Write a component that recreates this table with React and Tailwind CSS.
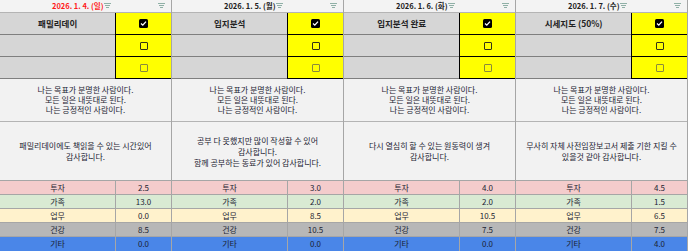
const days = [
  {
    date: "2026. 1. 4. (일)",
    red: true,
    tasks: ["패밀리데이", "", ""],
    thanks: ["패밀리데이에도 책읽을 수 있는 시간있어", "감사합니다."],
    values: ["2.5", "13.0", "0.0", "8.5", "0.0"],
  },
  {
    date: "2026. 1. 5. (월)",
    tasks: ["입지분석", "", ""],
    thanks: ["공부 다 못했지만 많이 작성할 수 있어", "감사합니다.", "함께 공부하는 동료가 있어 감사합니다."],
    values: ["3.0", "2.0", "8.5", "10.5", "0.0"],
  },
  {
    date: "2026. 1. 6. (화)",
    tasks: ["입지분석 완료", "", ""],
    thanks: ["다시 열심히 할 수 있는 원동력이 생겨", "감사합니다."],
    values: ["4.0", "2.0", "10.5", "7.5", "0.0"],
  },
  {
    date: "2026. 1. 7. (수)",
    tasks: ["시세지도 (50%)", "", ""],
    thanks: ["무사히 자체 사전임장보고서 제출 기한 지킬 수", "있을것 같아 감사합니다."],
    values: ["4.5", "1.5", "6.5", "7.5", "4.0"],
  },
];

const categories = [
  { name: "투자", bg: "bg-[#f4cccc]" },
  { name: "가족", bg: "bg-[#d9ead3]" },
  { name: "업무", bg: "bg-[#fff2cc]" },
  { name: "건강", bg: "bg-[#b7b7b7]" },
  { name: "기타", bg: "bg-[#4a86e8]" },
];

const FilterIcon = () => (
  <svg width="7" height="6" viewBox="0 0 7 6" className="shrink-0">
    <path d="M0 0.5H7M1 2.5H6M2 4.5H5" stroke="#8fb0a6" strokeWidth="1" />
  </svg>
);

const Check = ({ checked, faded }) =>
  checked ? (
    <div className="w-[9px] h-[9px] rounded-[1.5px] bg-black flex items-center justify-center">
      <svg width="7" height="7" viewBox="0 0 7 7">
        <path d="M1 3.6L2.8 5.2L6 1.6" stroke="#fff" strokeWidth="1.3" fill="none" />
      </svg>
    </div>
  ) : (
    <div
      className={`w-[8px] h-[8px] rounded-[1px] border-[1.5px] ${faded ? "border-[#8a8a3c]" : "border-[#333318]"}`}
    />
  );

const DayBlock = ({ day }) => (
  <div className="flex flex-col w-[172px] border-r border-[#a6a6a6]">
    <div className="h-[13px] bg-[#f3f3f3] border-b border-[#b4b4b4] flex items-center">
      <span
        className={`ml-[52px] text-[7.5px] font-bold leading-none whitespace-nowrap ${day.red ? "text-[#ff1a1a]" : "text-[#222]"}`}
      >
        {day.date}
      </span>
      <FilterIcon />
      <div className="ml-auto mr-[6px]">
        <FilterIcon />
      </div>
    </div>
    <div className="flex">
      <div className="w-[116px] flex flex-col">
        {day.tasks.map((t, i) => (
          <div
            key={i}
            className="h-[22px] bg-[#d6d6d6] border-b border-[#7f7f7f] flex items-center justify-center text-[8.5px] font-semibold text-[#222] whitespace-nowrap"
          >
            {t}
          </div>
        ))}
      </div>
      <div className="w-[56px] flex flex-col border-l border-black">
        {day.tasks.map((t, i) => (
          <div
            key={i}
            className="h-[22px] bg-[#ffff00] border-b border-black flex items-center justify-center"
          >
            <Check checked={i === 0} faded={i === 2} />
          </div>
        ))}
      </div>
    </div>
    <div className="h-[43px] bg-[#f2f2f2] border-b border-[#b4b4b4] flex flex-col items-center justify-center text-[8px] leading-[10px] text-[#1c2433]">
      <span>나는 목표가 분명한 사람이다.</span>
      <span>모든 일은 내뜻대로 된다.</span>
      <span>나는 긍정적인 사람이다.</span>
    </div>
    <div className="h-[59px] bg-[#f2f2f2] border-b border-[#a6a6a6] flex flex-col items-center justify-center text-[8px] leading-[11px] text-[#1c2433] whitespace-nowrap">
      {day.thanks.map((l, i) => (
        <span key={i}>{l}</span>
      ))}
    </div>
    {categories.map((c, i) => (
      <div key={c.name} className={`h-[14px] flex ${c.bg} border-b border-[#a6a6a6] last:border-b-0 text-[8px] text-[#1c2433]`}>
        <div className="w-[116px] border-r border-[#a6a6a6] flex items-center justify-center leading-none">
          {c.name}
        </div>
        <div className="flex-1 flex items-center justify-center leading-none">{day.values[i]}</div>
      </div>
    ))}
  </div>
);

export default function App() {
  return (
    <div className="w-[688px] h-[251px] overflow-hidden bg-[#f2f2f2] grid grid-cols-[172px_172px_172px_172px] font-['Noto_Sans_CJK_KR',sans-serif]">
      {days.map((d) => (
        <DayBlock key={d.date} day={d} />
      ))}
    </div>
  );
}
